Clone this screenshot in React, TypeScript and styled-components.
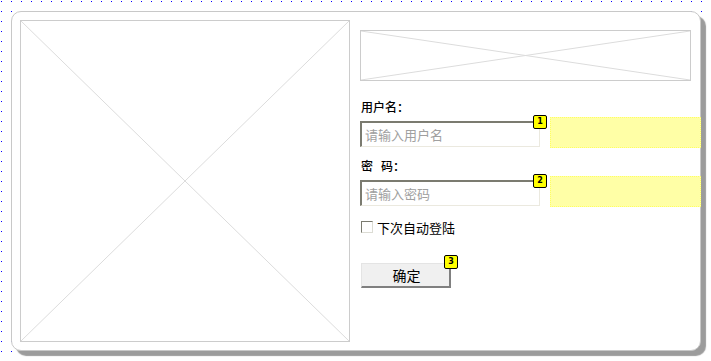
import React from "react";
import styled, { createGlobalStyle } from "styled-components";

const Global = createGlobalStyle`
  html, body { margin: 0; padding: 0; height: 100%; }
  body {
    background-color: #0000ff;
    background-image:
      linear-gradient(90deg, #fff 9px, transparent 9px),
      linear-gradient(#fff 9px, transparent 9px);
    background-size: 10px 10px;
    background-position: 2px 2px;
    font-family: "Noto Sans CJK SC", "Noto Sans", sans-serif;
    color: #000;
  }
  #root { height: 100%; }
`;

const Panel = styled.div`
  position: relative;
  box-sizing: border-box;
  margin: 11px 0 0 11px;
  width: 690px;
  height: 340px;
  background: #fff;
  border: 1px solid #c8c8c8;
  border-radius: 10px;
  box-shadow: 5px 5px 1px #9c9c9c;
  padding: 8px 8px 0 8px;
  display: flex;
  align-items: flex-start;
`;

const PlaceholderBox = styled.div<{ $w: number; $h: number }>`
  box-sizing: border-box;
  width: ${(p) => p.$w}px;
  height: ${(p) => p.$h}px;
  border: 1px solid #cccccc;
  background: #fff;
  flex-shrink: 0;
  svg { display: block; width: 100%; height: 100%; }
`;

const Column = styled.div`
  flex: 1;
  margin-left: 10px;
  display: flex;
  flex-direction: column;
  align-items: flex-start;
  padding-top: 10px;
`;

const Label = styled.div<{ $mt: number }>`
  margin-top: ${(p) => p.$mt}px;
  height: 14px;
  line-height: 14px;
  font-size: 12px;
  font-weight: 500;
  padding-left: 1px;
  white-space: nowrap;
`;

const LabelGap = styled.span`
  display: inline-block;
  width: 8px;
`;

const Field = styled.div<{ $mt: number }>`
  position: relative;
  margin-top: ${(p) => p.$mt}px;
  width: 180px;
  height: 26px;
`;

const Input = styled.input`
  box-sizing: border-box;
  width: 100%;
  height: 100%;
  margin: 0;
  padding: 0 0 0 3px;
  border-style: solid;
  border-width: 2px 1px 1px 2px;
  border-color: #7b7b70 #ebe9df #ebe9df #7b7b70;
  background: #fff;
  font-family: "Noto Sans CJK SC", "Noto Sans", sans-serif;
  font-size: 13px;
  outline: none;
  &::placeholder { color: #a0a0a0; }
`;

const Badge = styled.div<{ $left: number; $top: number }>`
  position: absolute;
  left: ${(p) => p.$left}px;
  top: ${(p) => p.$top}px;
  box-sizing: border-box;
  width: 14px;
  height: 14px;
  background: #ffff00;
  border: 1px solid #000;
  border-radius: 2px;
  font-family: "DejaVu Sans", sans-serif;
  font-size: 8px;
  font-weight: bold;
  line-height: 12px;
  text-align: center;
  z-index: 2;
`;

const Highlight = styled.div`
  position: absolute;
  left: 190px;
  top: -4px;
  width: 151px;
  height: 31px;
  box-sizing: border-box;
  border: 1px dotted #ffff60;
  background: #ffffa6;
  z-index: 2;
`;

const CheckRow = styled.label`
  margin-top: 14px;
  height: 14px;
  display: flex;
  align-items: center;
  font-size: 13px;
  padding-left: 1px;
  white-space: nowrap;
`;

const CheckBox = styled.span`
  box-sizing: border-box;
  width: 12px;
  height: 12px;
  margin-right: 4px;
  background: #fff;
  border-style: solid;
  border-width: 1px;
  border-color: #7b7b70 #dcdcd4 #dcdcd4 #7b7b70;
`;

const ButtonWrap = styled.div`
  position: relative;
  margin-top: 28px;
  margin-left: 1px;
`;

const Button = styled.button`
  box-sizing: border-box;
  width: 90px;
  height: 25px;
  margin: 0;
  padding: 0 0 0 2px;
  background: #f0f0f0;
  border-style: solid;
  border-width: 1px 2px 2px 1px;
  border-color: #e4e4e4 #808080 #808080 #e4e4e4;
  font-family: "Noto Sans CJK SC", "Noto Sans", sans-serif;
  font-size: 14px;
  color: #000;
`;

const Cross = () => (
  <svg preserveAspectRatio="none" viewBox="0 0 100 100">
    <line x1="0" y1="0" x2="100" y2="100" stroke="#dcdcdc" strokeWidth="1" vectorEffect="non-scaling-stroke" />
    <line x1="100" y1="0" x2="0" y2="100" stroke="#dcdcdc" strokeWidth="1" vectorEffect="non-scaling-stroke" />
  </svg>
);

export default function App() {
  return (
    <>
      <Global />
      <Panel>
        <PlaceholderBox $w={330} $h={322}>
          <Cross />
        </PlaceholderBox>
        <Column>
          <PlaceholderBox $w={331} $h={51}>
            <Cross />
          </PlaceholderBox>
          <Label $mt={19}>用户名：</Label>
          <Field $mt={7}>
            <Input placeholder="请输入用户名" />
            <Badge $left={173} $top={-6}>1</Badge>
            <Highlight />
          </Field>
          <Label $mt={12}>
            密<LabelGap />码：
          </Label>
          <Field $mt={7}>
            <Input placeholder="请输入密码" />
            <Badge $left={173} $top={-6}>2</Badge>
            <Highlight />
          </Field>
          <CheckRow>
            <CheckBox />
            下次自动登陆
          </CheckRow>
          <ButtonWrap>
            <Button>确定</Button>
            <Badge $left={83} $top={-7}>3</Badge>
          </ButtonWrap>
        </Column>
      </Panel>
    </>
  );
}
